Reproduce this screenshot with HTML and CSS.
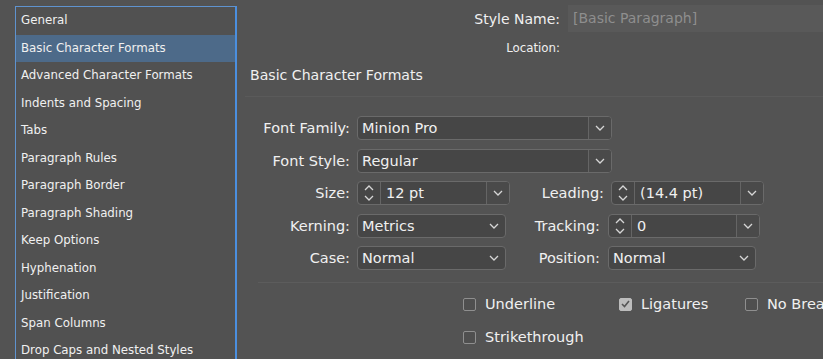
FILE: index.html
```html
<!DOCTYPE html>
<html>
<head>
<meta charset="utf-8">
<title>Paragraph Style Options</title>
<link rel="stylesheet" href="styles.css">
</head>
<body>
<div class="dialog">
    <ul class="nav">
        <li>General</li>
        <li class="on">Basic Character Formats</li>
        <li>Advanced Character Formats</li>
        <li>Indents and Spacing</li>
        <li>Tabs</li>
        <li>Paragraph Rules</li>
        <li>Paragraph Border</li>
        <li>Paragraph Shading</li>
        <li>Keep Options</li>
        <li>Hyphenation</li>
        <li>Justification</li>
        <li>Span Columns</li>
        <li>Drop Caps and Nested Styles</li>
    </ul>

    <div class="panel">
        <div class="head-row">
            <span class="head-label">Style Name:</span>
            <div class="name-input">[Basic Paragraph]</div>
        </div>
        <div class="head-row loc">
            <span class="head-label small">Location:</span>
        </div>
        <div class="section">Basic Character Formats</div>

        <div class="form">
            <div class="row">
                <span class="lbl">Font Family:</span>
                <div class="select w255">
                    <span class="val">Minion Pro</span>
                    <span class="drop split"><svg width="10" height="6" viewBox="0 0 10 6"><polyline points="1,1 5,5 9,1"/></svg></span>
                </div>
            </div>
            <div class="row">
                <span class="lbl">Font Style:</span>
                <div class="select w255">
                    <span class="val">Regular</span>
                    <span class="drop split"><svg width="10" height="6" viewBox="0 0 10 6"><polyline points="1,1 5,5 9,1"/></svg></span>
                </div>
            </div>
            <div class="row">
                <span class="lbl">Size:</span>
                <div class="select w153">
                    <span class="arrows"><svg width="10" height="6" viewBox="0 0 10 6"><polyline points="1,5 5,1 9,5"/></svg><svg width="10" height="6" viewBox="0 0 10 6"><polyline points="1,1 5,5 9,1"/></svg></span>
                    <span class="val">12 pt</span>
                    <span class="drop split"><svg width="10" height="6" viewBox="0 0 10 6"><polyline points="1,1 5,5 9,1"/></svg></span>
                </div>
                <span class="lbl2 lead">Leading:</span>
                <div class="select w153">
                    <span class="arrows"><svg width="10" height="6" viewBox="0 0 10 6"><polyline points="1,5 5,1 9,5"/></svg><svg width="10" height="6" viewBox="0 0 10 6"><polyline points="1,1 5,5 9,1"/></svg></span>
                    <span class="val">(14.4 pt)</span>
                    <span class="drop split"><svg width="10" height="6" viewBox="0 0 10 6"><polyline points="1,1 5,5 9,1"/></svg></span>
                </div>
            </div>
            <div class="row">
                <span class="lbl">Kerning:</span>
                <div class="select w149">
                    <span class="val">Metrics</span>
                    <span class="drop"><svg width="10" height="6" viewBox="0 0 10 6"><polyline points="1,1 5,5 9,1"/></svg></span>
                </div>
                <span class="lbl2">Tracking:</span>
                <div class="select w152">
                    <span class="arrows"><svg width="10" height="6" viewBox="0 0 10 6"><polyline points="1,5 5,1 9,5"/></svg><svg width="10" height="6" viewBox="0 0 10 6"><polyline points="1,1 5,5 9,1"/></svg></span>
                    <span class="val">0</span>
                    <span class="drop split"><svg width="10" height="6" viewBox="0 0 10 6"><polyline points="1,1 5,5 9,1"/></svg></span>
                </div>
            </div>
            <div class="row">
                <span class="lbl">Case:</span>
                <div class="select w149">
                    <span class="val">Normal</span>
                    <span class="drop"><svg width="10" height="6" viewBox="0 0 10 6"><polyline points="1,1 5,5 9,1"/></svg></span>
                </div>
                <span class="lbl2">Position:</span>
                <div class="select w148">
                    <span class="val">Normal</span>
                    <span class="drop"><svg width="10" height="6" viewBox="0 0 10 6"><polyline points="1,1 5,5 9,1"/></svg></span>
                </div>
            </div>
        </div>

        <div class="rule"></div>

        <div class="checks">
            <label class="check"><span class="box"></span>Underline</label>
            <label class="check"><span class="box on"><svg width="9" height="8" viewBox="0 0 9 8"><polyline points="1,4 3.5,6.5 8,1"/></svg></span>Ligatures</label>
            <label class="check"><span class="box"></span>No Break</label>
            <label class="check"><span class="box"></span>Strikethrough</label>
        </div>
    </div>
</div>
</body>
</html>
```

FILE: styles.css
```css
html, body{
    margin: 0;
    padding: 0;
}
body{
    width: 823px;
    height: 359px;
    overflow: hidden;
    background: #535353;
    color: #f0f0f0;
    font-family: "DejaVu Sans", "Liberation Sans", sans-serif;
    font-size: 14.5px;
}
.dialog{
    display: flex;
    align-items: flex-start;
}

/* left list */
.nav{
    list-style: none;
    margin: 6px 0 0 15px;
    padding: 0;
    width: 219px;
    height: 352px;
    flex: none;
    background: #515151;
    border: 1px solid #5f93cf;
    border-right: 2px solid #4b8fdf;
    border-bottom: none;
    font-size: 11.8px;
    overflow: hidden;
}
.nav li{
    height: 27.5px;
    line-height: 27.5px;
    padding-left: 5px;
    white-space: nowrap;
}
.nav li.on{
    background: #4d6a89;
}

/* right panel */
.panel{
    flex: 1;
    padding-top: 5px;
    white-space: nowrap;
    overflow: hidden;
}
.head-row{
    display: grid;
    grid-template-columns: 323px 1fr;
    column-gap: 8px;
    align-items: center;
    height: 27px;
}
.head-row.loc{
    height: 16px;
    margin-top: 8px;
}
.head-label{
    text-align: right;
    font-size: 14px;
}
.head-label.small{
    font-size: 11.8px;
}
.name-input{
    height: 27px;
    line-height: 27px;
    padding-left: 5px;
    background: #595959;
    color: #8e8e8e;
    font-size: 14px;
}
.section{
    margin: 10px 0 0 8px;
    padding: 0 0 12px 5px;
    line-height: 18px;
    font-size: 14.1px;
    border-bottom: 1px solid #5a5a5a;
}

/* form rows */
.form{
    margin-top: 19px;
    display: flex;
    flex-direction: column;
    gap: 8.5px;
}
.row{
    display: flex;
    align-items: center;
    height: 24px;
}
.lbl{
    width: 113px;
    margin-right: 7px;
    text-align: right;
}
.lbl2{
    width: 94px;
    margin-right: 8px;
    text-align: right;
}
.lbl2.lead{
    margin-right: 7px;
}
.select{
    display: flex;
    box-sizing: border-box;
    height: 24px;
    border: 1px solid #6a6a6a;
    border-radius: 4px;
    background: #464646;
    overflow: hidden;
}
.w255{ width: 255px; }
.w153{ width: 153px; }
.w152{ width: 152px; }
.w149{ width: 149px; }
.w148{ width: 148px; }
.val{
    flex: 1;
    padding-left: 4px;
    line-height: 22px;
}
.arrows + .val{
    padding-left: 5px;
}
.drop{
    width: 22px;
    display: flex;
    align-items: center;
    justify-content: center;
}
.drop.split{
    border-left: 1px solid #656565;
    background: #4a4a4a;
}
.arrows{
    width: 22px;
    display: flex;
    flex-direction: column;
    align-items: center;
    justify-content: center;
    gap: 4px;
    border-right: 1px solid #656565;
}
.select svg polyline{
    fill: none;
    stroke: #d6d6d6;
    stroke-width: 1.3;
}

/* checkboxes */
.rule{
    margin: 12px 0 0 21px;
    border-top: 1px solid #5c5c5c;
}
.checks{
    display: grid;
    grid-template-columns: 156px 126px auto;
    grid-auto-rows: 20px;
    row-gap: 13px;
    margin-top: 11px;
    padding-left: 226px;
}
.check{
    display: flex;
    align-items: center;
    gap: 9px;
}
.box{
    box-sizing: border-box;
    width: 13px;
    height: 13px;
    border: 1px solid #8f8f8f;
    border-radius: 2px;
    background: #4f4f4f;
    display: flex;
    align-items: center;
    justify-content: center;
}
.box.on{
    background: #bcbcbc;
    border-color: #bcbcbc;
}
.box svg polyline{
    fill: none;
    stroke: #555;
    stroke-width: 1.6;
}
```
